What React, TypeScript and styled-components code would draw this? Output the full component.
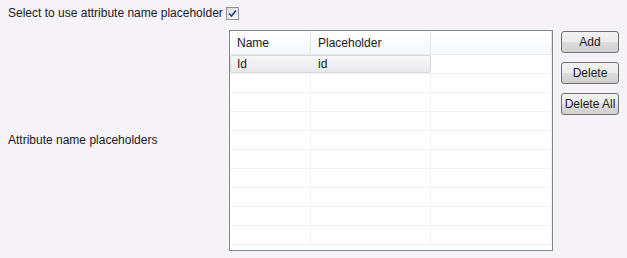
import React from "react";
import styled, { createGlobalStyle } from "styled-components";

const GlobalStyle = createGlobalStyle`
  html, body {
    margin: 0;
    padding: 0;
    background: #f5f3f7;
  }
  body {
    font-family: "Liberation Sans", Arial, sans-serif;
    font-size: 12px;
    color: #1a1a1a;
  }
`;

const Page = styled.div`
  width: 627px;
  height: 258px;
  background: #f5f3f7;
  overflow: hidden;
`;

const CheckRow = styled.label`
  display: flex;
  align-items: center;
  gap: 3px;
  height: 26px;
  padding-left: 8px;
  box-sizing: border-box;
`;

const CheckBox = styled.span`
  width: 13px;
  height: 13px;
  box-sizing: border-box;
  border: 1px solid #8e8f8f;
  background: linear-gradient(135deg, #dcdcdc, #f8f8f8);
  display: flex;
  align-items: center;
  justify-content: center;
`;

const Body = styled.div`
  display: flex;
  margin-top: 4px;
`;

const SideLabel = styled.div`
  width: 229px;
  padding-left: 8px;
  box-sizing: border-box;
  display: flex;
  align-items: center;
  padding-bottom: 2px;
`;

const Table = styled.div`
  width: 324px;
  height: 221px;
  box-sizing: border-box;
  border: 1px solid #828790;
  background: #ffffff;
  overflow: hidden;
`;

const HeaderRow = styled.div`
  display: grid;
  grid-template-columns: 81px 120px 1fr;
  height: 24px;
  background: linear-gradient(#ffffff, #f7f8fa);
  border-bottom: 1px solid #eaeaec;
  box-sizing: border-box;
`;

const HeaderCell = styled.div`
  display: flex;
  align-items: center;
  padding-left: 7px;
  border-right: 1px solid #e3e4e6;
`;

const Row = styled.div`
  position: relative;
  display: grid;
  grid-template-columns: 81px 120px 1fr;
  height: 19px;
  box-sizing: border-box;
  border-bottom: 1px solid #f1f1f3;
`;

const Cell = styled.div`
  display: flex;
  align-items: center;
  padding-left: 7px;
  border-right: 1px solid #f1f1f3;
`;

const Selection = styled.div`
  position: absolute;
  left: 0;
  top: 0;
  width: 201px;
  height: 18px;
  box-sizing: border-box;
  border: 1px solid #d9d9dc;
  border-radius: 2px;
  background: linear-gradient(#f7f7f8, #e9e9eb);
`;

const Text = styled.span`
  position: relative;
`;

const Buttons = styled.div`
  display: flex;
  flex-direction: column;
  gap: 9px;
  padding-left: 8px;
  padding-top: 1px;
`;

const Button = styled.button`
  width: 58px;
  height: 22px;
  box-sizing: border-box;
  border: 1px solid #707070;
  border-radius: 3px;
  background: linear-gradient(#f2f2f2 0%, #ebebeb 50%, #dddddd 51%, #cfcfcf 100%);
  font-family: "Liberation Sans", Arial, sans-serif;
  font-size: 12px;
  color: #1a1a1a;
  padding: 0;
`;

const rows = Array.from({ length: 10 }, (_, i) => i);

export default function App() {
  return (
    <Page>
      <GlobalStyle />
      <CheckRow>
        <span>Select to use attribute name placeholder</span>
        <CheckBox>
          <svg width="9" height="9" viewBox="0 0 9 9">
            <path d="M1 4.5 L3.5 7 L8 1.5" stroke="#2b3f8f" strokeWidth="1.6" fill="none" />
          </svg>
        </CheckBox>
      </CheckRow>
      <Body>
        <SideLabel>Attribute name placeholders</SideLabel>
        <Table>
          <HeaderRow>
            <HeaderCell>Name</HeaderCell>
            <HeaderCell>Placeholder</HeaderCell>
            <HeaderCell />
          </HeaderRow>
          {rows.map((i) => (
            <Row key={i}>
              {i === 0 && <Selection />}
              <Cell><Text>{i === 0 ? "Id" : ""}</Text></Cell>
              <Cell><Text>{i === 0 ? "id" : ""}</Text></Cell>
              <Cell />
            </Row>
          ))}
        </Table>
        <Buttons>
          <Button>Add</Button>
          <Button>Delete</Button>
          <Button>Delete All</Button>
        </Buttons>
      </Body>
    </Page>
  );
}
